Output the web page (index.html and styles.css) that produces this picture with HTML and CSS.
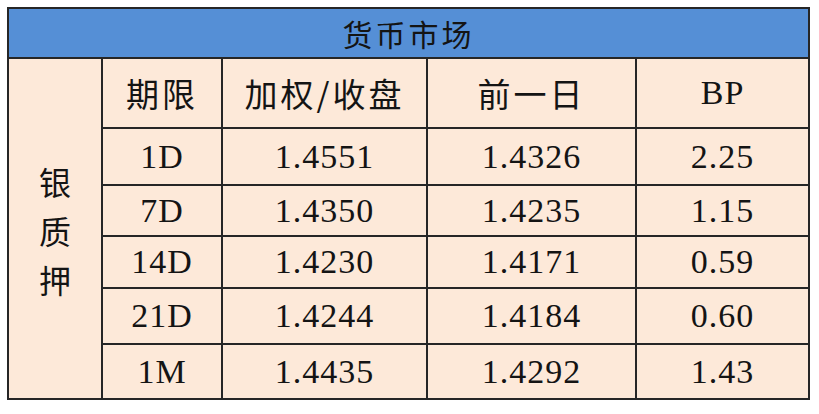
FILE: index.html
```html
<!DOCTYPE html>
<html lang="zh-CN">
<head>
<meta charset="utf-8">
<title>货币市场</title>
<link rel="stylesheet" href="styles.css">
</head>
<body>
<table class="rates">
  <colgroup>
    <col class="c-side">
    <col class="c-term">
    <col class="c-rate">
    <col class="c-prev">
    <col class="c-bp">
  </colgroup>
  <thead>
    <tr class="r-title"><th colspan="5" class="title">货币市场</th></tr>
  </thead>
  <tbody>
    <tr class="r-head">
      <td rowspan="6" class="side"><span class="vert">银<br>质<br>押</span></td>
      <td class="cjk">期限</td>
      <td class="cjk">加权/收盘</td>
      <td class="cjk">前一日</td>
      <td class="num">BP</td>
    </tr>
    <tr class="r1"><td class="num">1D</td><td class="num">1.4551</td><td class="num">1.4326</td><td class="num">2.25</td></tr>
    <tr class="r2"><td class="num">7D</td><td class="num">1.4350</td><td class="num">1.4235</td><td class="num">1.15</td></tr>
    <tr class="r3"><td class="num">14D</td><td class="num">1.4230</td><td class="num">1.4171</td><td class="num">0.59</td></tr>
    <tr class="r4"><td class="num">21D</td><td class="num">1.4244</td><td class="num">1.4184</td><td class="num">0.60</td></tr>
    <tr class="r5"><td class="num">1M</td><td class="num">1.4435</td><td class="num">1.4292</td><td class="num">1.43</td></tr>
  </tbody>
</table>
</body>
</html>
```
FILE: styles.css
```css
html, body {
  margin: 0;
  padding: 0;
  background: #ffffff;
}
body {
  padding: 7px;
  font-family: "Liberation Serif", "Noto Sans CJK SC", serif;
  color: #141414;
}
.rates {
  border-collapse: collapse;
  table-layout: fixed;
  width: 803px;
  background: #fde9d9;
}
.c-side { width: 94px; }
.c-term { width: 120px; }
.c-rate { width: 205px; }
.c-prev { width: 209px; }
.c-bp { width: 173px; }

.rates th, .rates td {
  border: 2px solid #262626;
  padding: 0;
  text-align: center;
  vertical-align: middle;
  line-height: 1;
  overflow: hidden;
  white-space: nowrap;
}
.title {
  background: #558fd6;
  font-family: "Noto Sans CJK SC", sans-serif;
  font-weight: 400;
  font-size: 30px;
  letter-spacing: 3px;
  padding-left: 3px;
  height: 48px;
}
.r-head td { height: 68px; }
.r1 td { height: 55px; }
.r2 td { height: 49px; }
.r3 td { height: 50px; }
.r4 td { height: 54px; }
.r5 td { height: 53px; }

.cjk {
  font-family: "Noto Sans CJK SC", sans-serif;
  font-weight: 400;
  font-size: 33px;
  letter-spacing: 3px;
  padding-left: 3px;
}
.num {
  font-family: "Liberation Serif", serif;
  font-size: 34px;
  letter-spacing: 1px;
}
.side {
  vertical-align: middle;
}
.vert {
  display: inline-block;
  font-family: "Noto Sans CJK SC", sans-serif;
  font-size: 32px;
  line-height: 49px;
  position: relative;
  top: 2px;
}
```
